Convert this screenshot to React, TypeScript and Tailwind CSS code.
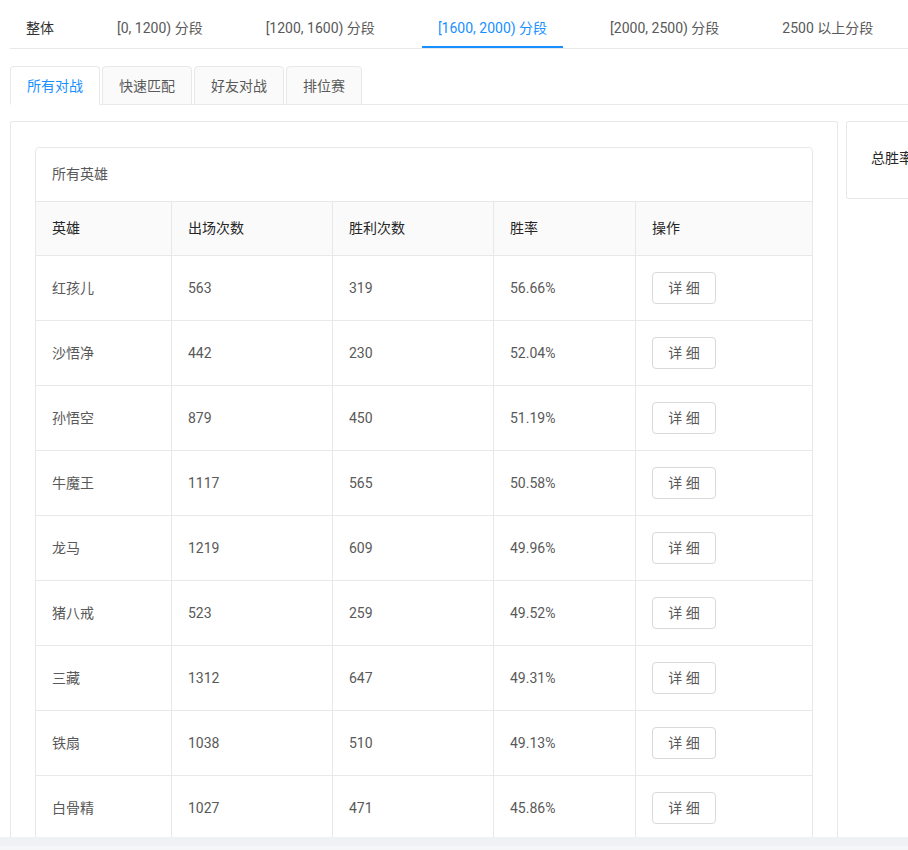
import React from 'react';

const rangeTabs = [
  '整体',
  '[0, 1200) 分段',
  '[1200, 1600) 分段',
  '[1600, 2000) 分段',
  '[2000, 2500) 分段',
  '2500 以上分段',
];

const modeTabs = ['所有对战', '快速匹配', '好友对战', '排位赛'];

const heroes = [
  { name: '红孩儿', games: 563, wins: 319, rate: '56.66%' },
  { name: '沙悟净', games: 442, wins: 230, rate: '52.04%' },
  { name: '孙悟空', games: 879, wins: 450, rate: '51.19%' },
  { name: '牛魔王', games: 1117, wins: 565, rate: '50.58%' },
  { name: '龙马', games: 1219, wins: 609, rate: '49.96%' },
  { name: '猪八戒', games: 523, wins: 259, rate: '49.52%' },
  { name: '三藏', games: 1312, wins: 647, rate: '49.31%' },
  { name: '铁扇', games: 1038, wins: 510, rate: '49.13%' },
  { name: '白骨精', games: 1027, wins: 471, rate: '45.86%' },
];

const cols = 'grid grid-cols-[136px_161px_161px_142px_1fr]';

function RangeTabs() {
  const active = 3;
  return (
    <div className="flex border-b border-[#e8e8e8] h-[49px]">
      {rangeTabs.map((t, i) => (
        <div
          key={t}
          className={`relative mr-[31px] px-4 pt-[17px] leading-[22px] whitespace-nowrap ${
            i === active ? 'text-[#1890ff]' : i === 0 ? 'text-[#333333]' : 'text-[#595959]'
          }`}>
          {t}
          {i === active && (
            <span className="absolute left-0 right-0 bottom-[0px] h-[2px] bg-[#1890ff]" />
          )}
        </div>
      ))}
    </div>
  );
}

function ModeTabs() {
  return (
    <div className="mt-[17px] flex border-b border-[#e8e8e8] h-[39px]">
      {modeTabs.map((t, i) => (
        <div
          key={t}
          className={`mr-[2px] h-[39px] px-4 flex items-center border border-[#e8e8e8] rounded-t-[4px] leading-[22px] ${
            i === 0
              ? 'bg-white text-[#1890ff] border-b-white'
              : 'bg-[#fafafa] text-[#595959] h-[38px]'
          }`}>
          {t}
        </div>
      ))}
    </div>
  );
}

function HeroTable() {
  return (
    <div className="border border-[#e8e8e8] rounded-t-[4px]">
      <div className="h-[53px] px-4 flex items-center text-[#595959]">所有英雄</div>
      <div className={`${cols} bg-[#fafafa] border-t border-[#e8e8e8] h-[54px] text-[#262626]`}>
        {['英雄', '出场次数', '胜利次数', '胜率', '操作'].map((h, i) => (
          <div
            key={h}
            className={`px-4 flex items-center ${i < 4 ? 'border-r border-[#e8e8e8]' : ''}`}>
            {h}
          </div>
        ))}
      </div>
      {heroes.map((h) => (
        <div
          key={h.name}
          className={`${cols} border-t border-[#e8e8e8] h-[65px] text-[#595959]`}>
          <div className="px-4 flex items-center border-r border-[#e8e8e8]">{h.name}</div>
          <div className="px-4 flex items-center border-r border-[#e8e8e8]">{h.games}</div>
          <div className="px-4 flex items-center border-r border-[#e8e8e8]">{h.wins}</div>
          <div className="px-4 flex items-center border-r border-[#e8e8e8]">{h.rate}</div>
          <div className="px-4 flex items-center">
            <button className="h-[32px] w-[64px] border border-[#d9d9d9] rounded-[4px] bg-white text-[#595959] leading-[30px]">
              详 细
            </button>
          </div>
        </div>
      ))}
    </div>
  );
}

export default function App() {
  return (
    <div
      className="h-[850px] flex flex-col overflow-hidden bg-white text-[14px]"
      style={{ fontFamily: 'Roboto, "Noto Sans CJK SC", sans-serif' }}>
      <div className="flex-1 min-h-0 overflow-hidden">
        <div className="w-[1200px] pl-[10px]">
          <RangeTabs />
          <ModeTabs />
          <div className="mt-4 flex gap-2 items-start">
            <div className="w-[828px] shrink-0 border border-[#e8e8e8] px-6 pt-[25px] rounded-[2px]">
              <HeroTable />
            </div>
            <div className="w-[300px] h-[78px] shrink-0 border border-[#e8e8e8] rounded-[2px] px-6 pt-[25px] text-[#262626] leading-[22px]">
              总胜率
            </div>
          </div>
        </div>
      </div>
      <div className="h-[13px] shrink-0 bg-[#eff1f4] border-b-[4px] border-[#f5f6f8]" />
    </div>
  );
}
